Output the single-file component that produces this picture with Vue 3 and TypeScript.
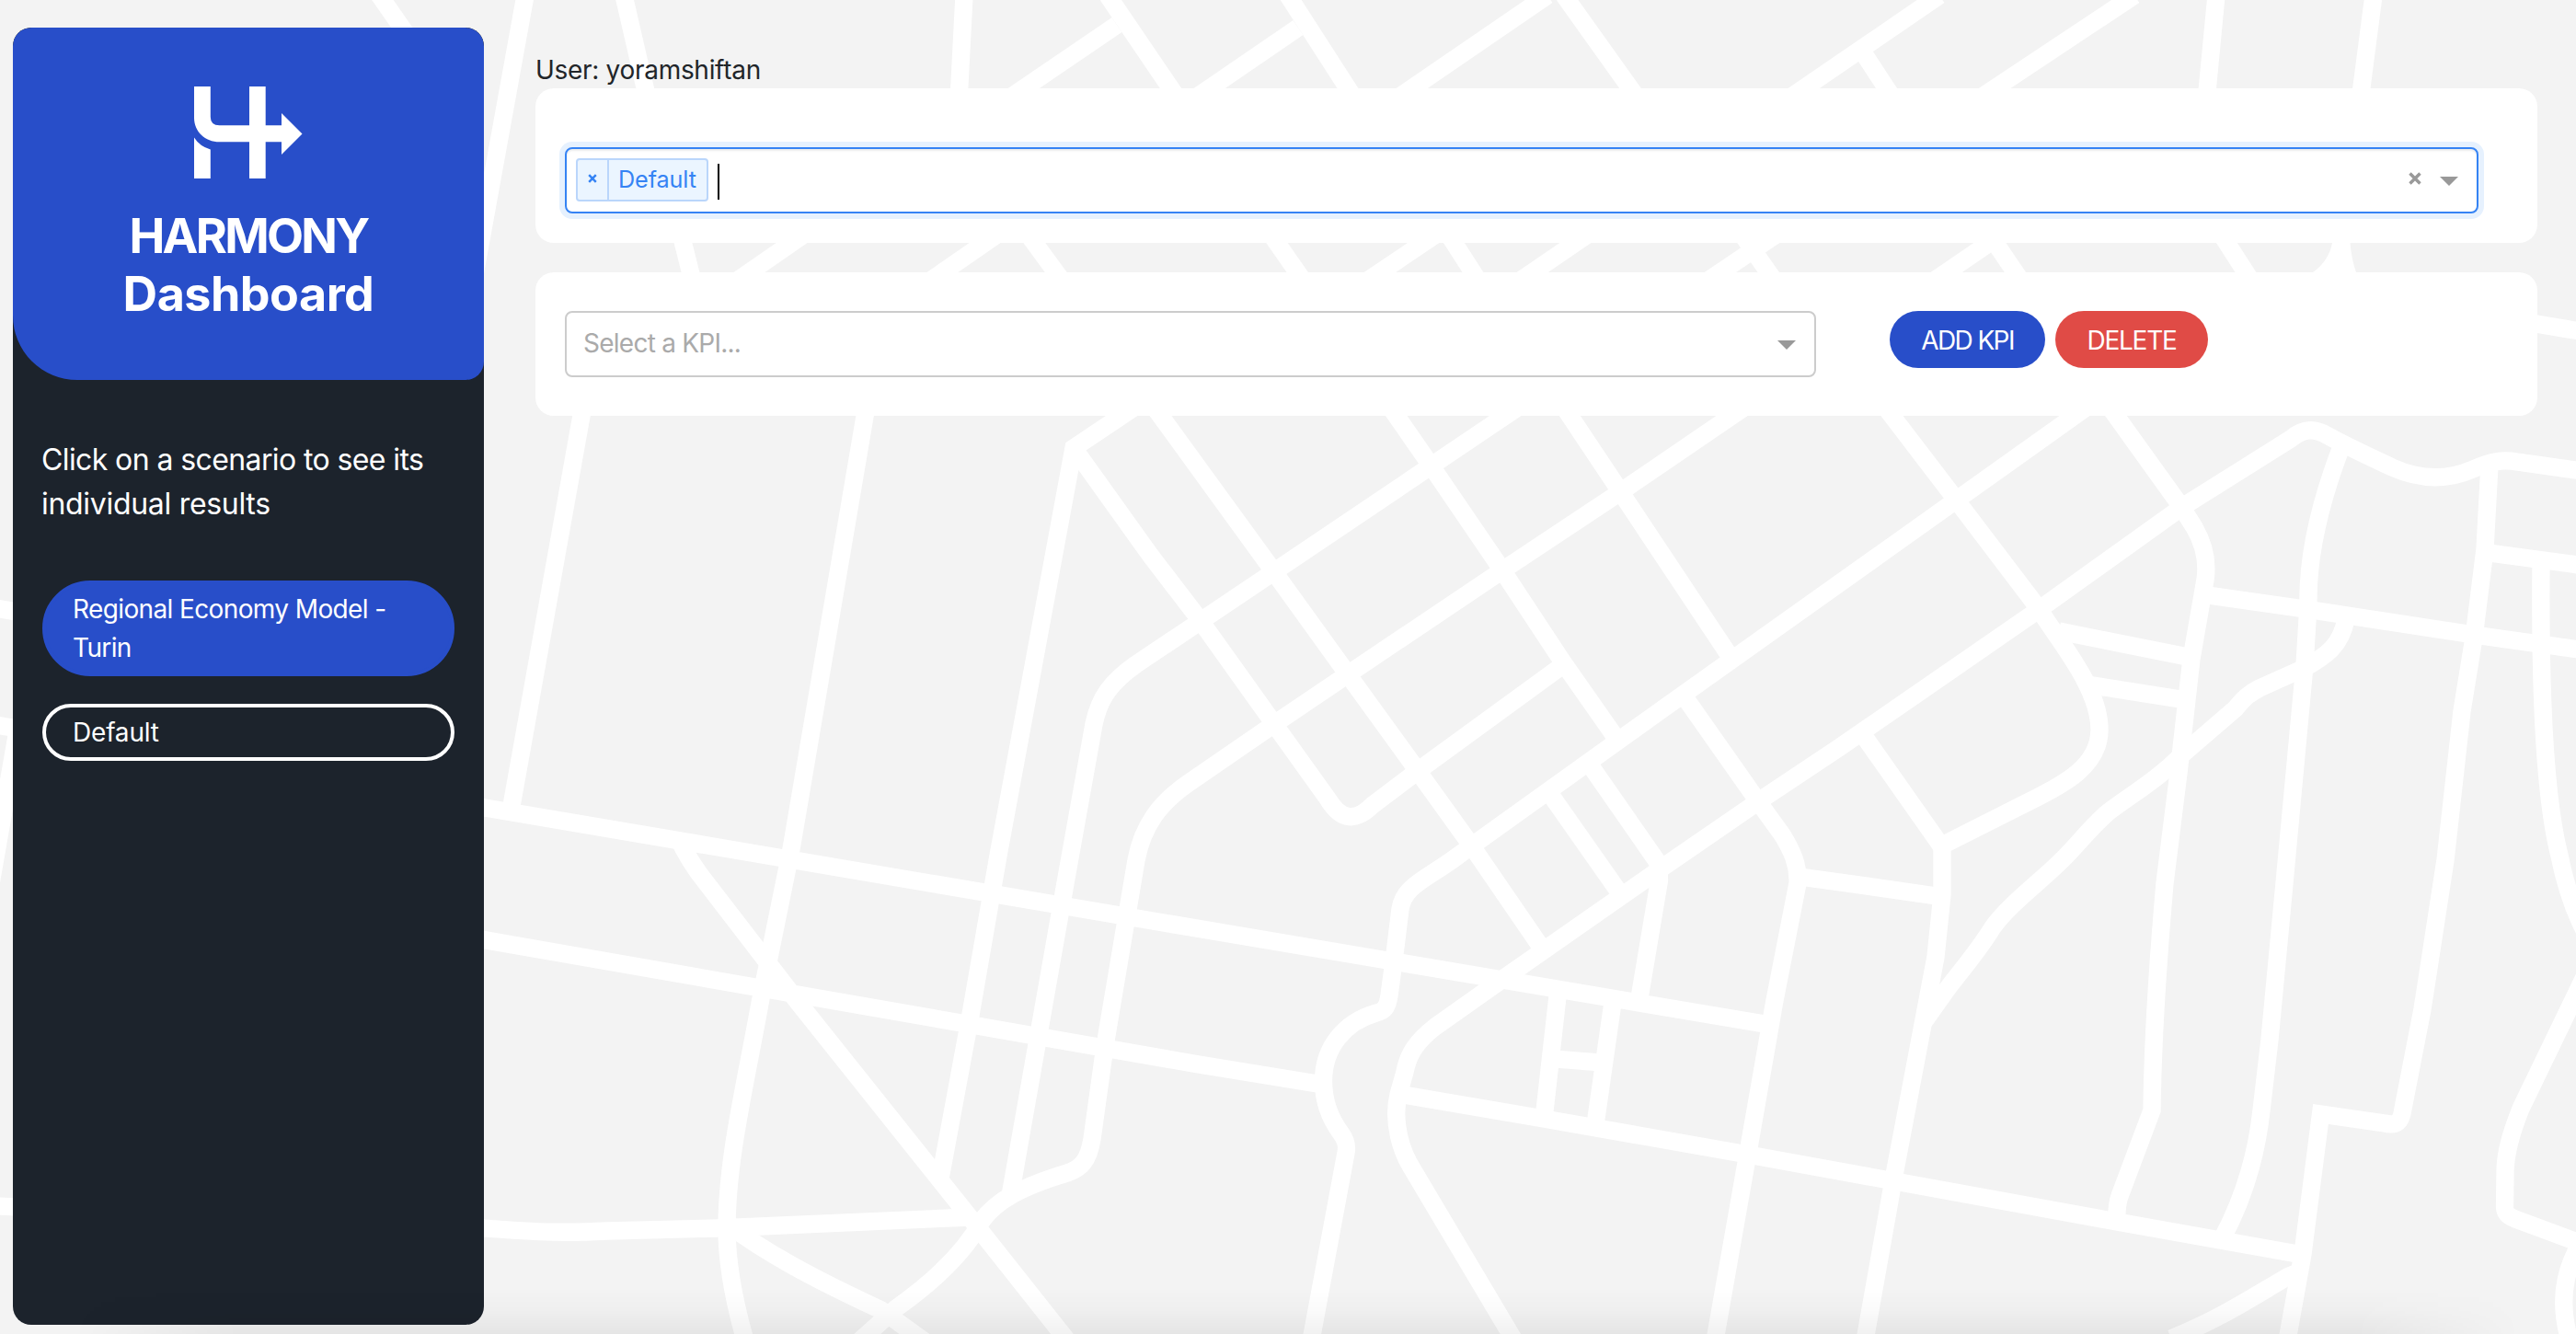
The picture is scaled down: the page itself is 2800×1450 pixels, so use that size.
<script setup lang="ts">
import { ref } from 'vue'

interface Scenario {
  name: string
  active: boolean
}

const user = ref('yoramshiftan')
const scenarios = ref<Scenario[]>([
  { name: 'Regional Economy Model - Turin', active: true },
  { name: 'Default', active: false },
])
const selected = ref<string[]>(['Default'])

// Street centre lines of the city map behind the page
const streets: string[] = [
  // top edge
  'M571 -5L517 293L500 385',
  'M409 -10L450 49',
  'M678 -5L704 108',
  'M1048 -5L1042 110',
  'M1204 -5L1282 110',
  'M1214 27L1098 106',
  'M1411 30L1300 106',
  'M1400 -5L1474 110',
  'M1682 -5L1520 106',
  'M1700 -5L1782 110',
  'M2108 -5L1946 106',
  'M2027 60L2061 112',
  'M2320 -5L2153 106',
  'M2409 -5L2398 110',
  'M2580 -5L2565 110',
  // between the cards
  'M740 254L754 310',
  'M875 254L800 306',
  'M1085 254L1010 306',
  'M1117 254L1158 310',
  'M1381 254L1420 310',
  'M1562 254L1485 306',
  'M1574 254L1610 310',
  'M1727 254L1651 306',
  'M1932 254L1855 306',
  'M1893 254L1932 310',
  'M2177 254L2101 306',
  'M2162 254L2200 310',
  'M2414 254L2450 310',
  'M2745 350L2810 361',
  // left edge
  'M-5 661L60 672',
  'M20 789L-30 1075',
  // avenues
  'M-10 787L1250 1000.5L1924 1114',
  'M500 1017L1300 1156.5L1432 1178',
  'M-5 1311L400 1328L526 1335C590 1340 620 1340 660 1338L780 1335L1055 1323',
  'M1520 1189L1678 1216L1900 1255L2301 1328L2503 1364',
  // western blocks
  'M635 435L556 876',
  'M943 435L860 923L827 1085C810 1180 790 1260 790 1335C790 1375 798 1415 810 1457',
  'M737 910Q748 935 768 960L868 1090L1061 1332L1160 1457',
  'M790 1330C830 1360 880 1388 958 1424L1005 1458',
  'M1240 438L1167 487L1085 930L1055 1103L1022 1281',
  'M1167 487L1250 603L1305 675L1385 787L1443 868C1458 893 1474 893 1492 875L1541 838L1696 725',
  'M1247 432L1385 622L1465 733L1541 838L1600 920L1674 1028',
  'M1657 438L1384 622L1235 722C1208 741 1195 758 1189 787L1158 960L1098 1300',
  'M1903 438L1761 535L1633 620L1465 733L1385 787L1292 851C1260 873 1242 898 1235 935L1201 1137L1187 1238C1183 1262 1175 1270 1160 1275C1110 1290 1083 1305 1067 1327C1045 1368 1005 1400 974 1422L935 1457',
  // central blocks
  'M1508 438L1556 507L1633 620L1699 720L1755 800',
  'M1697 438L1761 534L1882 716',
  'M2276 437L2050 598L1804 773L1585 930C1552 955 1526 962 1522 988L1515 1045L1510 1082C1508 1096 1504 1099 1496 1101C1461 1111 1438.500 1139 1438.500 1175C1438.500 1196 1446 1216 1457 1231C1463 1239 1464.500 1245 1463 1253L1425 1457',
  'M2810 512.500L2736 502C2719 499 2706 502 2688 510C2656 524 2627 520 2600 508C2575 496 2551 485 2529 473C2517 466 2504 465 2490 477L2372 551L2217 662L2000 812L1913 870L1804 945L1635 1063L1560 1116C1541 1131 1531 1144 1527 1165L1520 1190C1513 1220 1523 1252 1536 1272L1646 1457',
  'M1830 756L1908 867L1937 907C1948 925 1955 940 1954 960L1928.500 1090L1900.500 1250L1864 1457',
  'M1956 953L2000 959L2105 974',
  'M1730 834L1803 939L1803.500 957L1782 1085',
  'M1687 866L1760 970',
  'M1693 1083L1678.500 1212',
  'M1752.500 1093L1734.500 1219',
  'M1690 1151L1740 1155',
  // eastern blocks
  'M2290 438L2371 551L2385 573C2396 592 2400 610 2397 630L2382 716L2368 840L2353 960C2346 1040 2340 1120 2339 1207L2304 1300Q2300 1312 2301 1330',
  'M2045 437L2126 543L2217 663C2240 700 2282 748 2282 793C2282 832 2245 852 2204 872L2111 919L2111 972L2104 1040L2059 1277L2027 1457',
  'M2026 800L2111 921',
  'M2238 686L2378 714',
  'M2268 744L2370 760',
  'M2400 647L2509 662.500L2689 690L2810 707',
  'M2550 672C2545 702 2528 713 2505 726L2456 748C2444 754 2438 760 2430 770L2372 820C2345 848 2310 868 2290 884C2267 905 2257 920 2240 936C2218 958 2183 984 2166 1008C2150 1034 2134 1052 2118 1073L2091 1111',
  'M2546 483C2520 550 2508 605 2509 657L2505 723L2483 960L2467 1130L2458 1207C2452 1262 2435 1310 2415 1347',
  'M2706 505L2701 597L2689 693L2676 773L2658 935L2633 1097L2612 1205C2610 1220 2605 1224 2592 1221L2522.500 1211L2503 1363L2486 1457',
  'M2698 600L2810 615',
  'M2762 612C2761 720 2764 860 2782 930Q2792 980 2812 1017',
  'M2810 1060L2740 1205C2728 1235 2723 1255 2723 1275L2722.500 1312C2723 1320 2727 1322 2734 1325L2812 1354',
  'M2812 1340C2792 1370 2778 1405 2793 1457',
  'M2500 1382L2486 1388C2440 1415 2415 1432 2360 1455',
]
</script>

<template>
  <div class="page">
    <svg class="map" viewBox="0 0 2800 1450" aria-hidden="true">
      <path v-for="(d, i) in streets" :key="i" :d="d" />
      <path class="junction" d="M2535 264C2533 275 2527 287 2514 296L2561 296Q2556 282 2554.500 264Z" />
    </svg>

    <aside class="sidebar">
      <header class="brand">
        <svg class="logo" viewBox="0 0 118 100" aria-hidden="true">
          <path d="M0 0H17.800V33Q17.800 42.300 27.500 42.300H60V0H77.700V42.300H95V29L117.500 51.500L95 74V60.300H77.700V100H60V60.300H27.500C12 60.300 0 49 0 34Z" />
          <path d="M0 55.500Q6 65 17.800 68.500V100H0Z" />
        </svg>
        <h1 class="title"><span class="t1">HARMONY</span><br /><span class="t2">Dashboard</span></h1>
      </header>
      <p class="intro">Click on a scenario to see its <span class="wide">individual results</span></p>
      <nav class="scenarios">
        <a v-for="s in scenarios" :key="s.name" class="scenario" :class="{ active: s.active }">{{ s.name }}</a>
      </nav>
    </aside>

    <main class="main">
      <div class="user">User: {{ user }}</div>

      <section class="card card-scenarios">
        <div class="select focused">
          <span v-for="v in selected" :key="v" class="tag">
            <span class="tag-x"><svg viewBox="0 0 10 10"><path d="M1.200 1.200L8.800 8.800M8.800 1.200L1.200 8.800" /></svg></span>
            <span class="tag-label">{{ v }}</span>
          </span>
          <span class="caret"></span>
          <svg class="clear" viewBox="0 0 14 14"><path d="M1.500 1.500L12.500 12.500M12.500 1.500L1.500 12.500" /></svg>
          <span class="arrow"></span>
        </div>
      </section>

      <section class="card card-kpi">
        <div class="select kpi">
          <span class="placeholder">Select a KPI...</span>
          <span class="arrow"></span>
        </div>
        <div class="actions">
          <button class="btn add">ADD KPI</button>
          <button class="btn delete">DELETE</button>
        </div>
      </section>
    </main>

    <div class="edge-shade"></div>
  </div>
</template>

<style>
body {
  margin: 0;
  overflow: hidden;
}
</style>

<style scoped>
.page {
  position: relative;
  box-sizing: border-box;
  width: 2800px;
  height: 1450px;
  overflow: hidden;
  display: flex;
  align-items: flex-start;
  gap: 56px;
  padding: 30px 42px 10px 14px;
  background: #f3f3f3;
  color: #212529;
  font-family: Inter, "Liberation Sans", sans-serif;
  font-size: 28px;
  line-height: 42px;
}
.page * {
  box-sizing: border-box;
}
.map {
  position: absolute;
  inset: 0;
  width: 2800px;
  height: 1450px;
}
.map path {
  fill: none;
  stroke: #fff;
  stroke-width: 19.3;
}
.map .junction {
  fill: #fff;
  stroke: none;
}
.sidebar {
  position: relative;
  flex: none;
  width: 512px;
  height: 1410px;
  border-radius: 20px;
  background: #1c232c;
  color: #fff;
  overflow: hidden;
}
.brand {
  height: 383px;
  padding-top: 64px;
  border-radius: 20px 20px 20px 70px;
  background: #284ec9;
  text-align: center;
}
.logo {
  display: block;
  width: 118px;
  height: 100px;
  margin-left: 197px;
  fill: #fff;
}
.title {
  margin: 31px 0 0;
  font-size: 52px;
  line-height: 63px;
  font-weight: 700;
}
.t1 {
  letter-spacing: -2.7px;
}
.t2 {
  letter-spacing: -0.5px;
}
.intro {
  margin: 63px 32px 0 31px;
  font-size: 32px;
  line-height: 48px;
  letter-spacing: -0.6px;
}
.intro .wide {
  letter-spacing: -0.3px;
}
.scenarios {
  display: flex;
  flex-direction: column;
  gap: 30px;
  margin: 59px 32px 0;
}
.scenario {
  padding: 6px 29px;
  border: 4px solid #fff;
  border-radius: 52px;
  letter-spacing: -0.2px;
}
.scenario.active {
  border-color: #284ec9;
  background: #284ec9;
  letter-spacing: -0.62px;
}
.main {
  position: relative;
  flex: 1;
  padding-top: 24px;
}
.user {
  height: 42px;
  padding-top: 1px;
  letter-spacing: -0.3px;
}
.card {
  background: #fff;
  border-radius: 20px;
  padding: 64px 64px 32px 32px;
}
.card-scenarios {
  height: 168px;
}
.card-kpi {
  height: 156px;
  margin-top: 32px;
  padding-top: 42px;
  display: flex;
  gap: 80px;
}
.select {
  display: flex;
  align-items: center;
  height: 72px;
  border: 2px solid #ccc;
  border-radius: 8px;
  background: #fff;
}
.select.kpi {
  width: 1360px;
}
.focused {
  border-color: #3583f4;
  padding-left: 10px;
  box-shadow: inset 0 2px 2px rgba(0, 0, 0, 0.075), 0 0 0 6px #e6f1fe;
}
.tag {
  display: flex;
  width: 144px;
  height: 47px;
  margin-top: -1px;
  border: 2px solid #bad6fb;
  border-radius: 4px;
  background: #ebf5ff;
  color: #3583f4;
  font-size: 25.2px;
  line-height: 42px;
}
.tag-x {
  display: flex;
  width: 34px;
  padding: 15px 0 0 11px;
  border-right: 2px solid #bad6fb;
}
.tag-x svg {
  width: 10px;
  height: 10px;
  fill: none;
  stroke: #3583f4;
  stroke-width: 2.5;
}
.tag-label {
  padding-left: 10px;
  letter-spacing: -0.1px;
}
.caret {
  width: 2px;
  height: 39px;
  margin-left: 10px;
  margin-top: 3px;
  background: #000;
}
.clear {
  width: 14px;
  height: 14px;
  margin: -4px 20px 0 auto;
  fill: none;
  stroke: #999;
  stroke-width: 3.4;
}
.arrow {
  margin-right: 20px;
  margin-top: 2px;
  border: 10px solid transparent;
  border-top-color: #999;
  border-bottom: 0;
}
.placeholder {
  flex: 1;
  padding-left: 18px;
  margin-top: -2px;
  color: #aaa;
  letter-spacing: -0.75px;
}
.actions {
  display: flex;
  align-items: flex-start;
  gap: 11px;
}
.btn {
  height: 62px;
  padding: 1px 0 0;
  border: 0;
  border-radius: 31px;
  color: #fff;
  font: inherit;
  letter-spacing: -1.25px;
}
.add {
  width: 169px;
  background: #284ec9;
  letter-spacing: -1.6px;
}
.delete {
  width: 166px;
  background: #e04b46;
}
.edge-shade {
  position: absolute;
  left: 80px;
  right: 60px;
  bottom: 0;
  height: 48px;
  background: linear-gradient(to bottom, transparent, rgba(0, 0, 0, 0.015) 45%, rgba(0, 0, 0, 0.055));
  -webkit-mask-image: linear-gradient(to right, transparent, #000 180px, #000 calc(100% - 180px), transparent);
  mask-image: linear-gradient(to right, transparent, #000 180px, #000 calc(100% - 180px), transparent);
}
</style>
